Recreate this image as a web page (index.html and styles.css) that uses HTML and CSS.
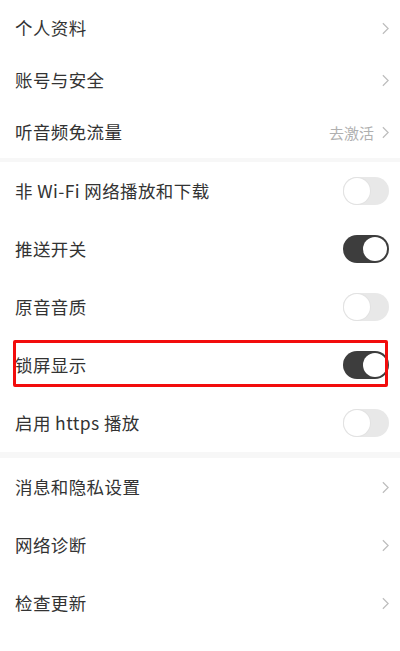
FILE: index.html
```html
<!DOCTYPE html>
<html lang="zh">
<head>
<meta charset="utf-8">
<link rel="stylesheet" href="styles.css">
</head>
<body>
<div class="page">
  <section class="group g1">
    <div class="row"><span class="label">个人资料</span><span class="chev"><svg viewBox="0 0 8 14" width="7" height="13"><path d="M1 1l6 6-6 6" fill="none" stroke="#bdbdbd" stroke-width="1.4"/></svg></span></div>
    <div class="row"><span class="label">账号与安全</span><span class="chev"><svg viewBox="0 0 8 14" width="7" height="13"><path d="M1 1l6 6-6 6" fill="none" stroke="#bdbdbd" stroke-width="1.4"/></svg></span></div>
    <div class="row"><span class="label">听音频免流量</span><span class="right"><span class="hint">去激活</span><span class="chev"><svg viewBox="0 0 8 14" width="7" height="13"><path d="M1 1l6 6-6 6" fill="none" stroke="#bdbdbd" stroke-width="1.4"/></svg></span></span></div>
  </section>
  <div class="sep"></div>
  <section class="group g2">
    <div class="row"><span class="label">非 Wi-Fi 网络播放和下载</span><span class="toggle off"><span class="knob"></span></span></div>
    <div class="row"><span class="label">推送开关</span><span class="toggle on"><span class="knob"></span></span></div>
    <div class="row"><span class="label">原音音质</span><span class="toggle off"><span class="knob"></span></span></div>
    <div class="row marked"><span class="label">锁屏显示</span><span class="toggle on"><span class="knob"></span></span><span class="mark"></span></div>
    <div class="row"><span class="label">启用 https 播放</span><span class="toggle off"><span class="knob"></span></span></div>
  </section>
  <div class="sep sep2"></div>
  <section class="group g3">
    <div class="row"><span class="label">消息和隐私设置</span><span class="chev"><svg viewBox="0 0 8 14" width="7" height="13"><path d="M1 1l6 6-6 6" fill="none" stroke="#bdbdbd" stroke-width="1.4"/></svg></span></div>
    <div class="row"><span class="label">网络诊断</span><span class="chev"><svg viewBox="0 0 8 14" width="7" height="13"><path d="M1 1l6 6-6 6" fill="none" stroke="#bdbdbd" stroke-width="1.4"/></svg></span></div>
    <div class="row"><span class="label">检查更新</span><span class="chev"><svg viewBox="0 0 8 14" width="7" height="13"><path d="M1 1l6 6-6 6" fill="none" stroke="#bdbdbd" stroke-width="1.4"/></svg></span></div>
  </section>
</div>
</body>
</html>
```
FILE: styles.css
```css
* { box-sizing: border-box; }
html, body { margin: 0; padding: 0; background: #fff; }
body {
  width: 400px;
  height: 651px;
  overflow: hidden;
  font-family: "Noto Sans CJK SC", "Noto Sans", sans-serif;
  color: #333;
}
.page { padding-top: 2px; }
.group { display: flex; flex-direction: column; }
.row {
  position: relative;
  display: flex;
  align-items: center;
  justify-content: space-between;
  padding: 0 11px 0 15px;
}
.g1 .row { height: 52px; }
.g2 .row, .g3 .row { height: 58px; }
.label { font-size: 17.5px; line-height: 1; letter-spacing: 0.4px; }
.right { display: flex; align-items: center; gap: 8px; }
.hint { font-size: 15px; color: #b0b0b0; }
.chev { display: flex; align-items: center; width: 7px; }
.sep { height: 4px; background: #f7f7f7; }
.sep2 { height: 6px; }
.toggle {
  position: relative;
  width: 46px;
  height: 28px;
  border-radius: 14px;
}
.toggle .knob {
  position: absolute;
  top: 1px;
  width: 26px;
  height: 26px;
  border-radius: 50%;
  background: #fff;
}
.toggle.off { background: #e8e8e8; }
.toggle.off .knob { left: 1px; box-shadow: 0 0 0 1px #e2e2e2; }
.toggle.on { background: #3d3d3d; }
.toggle.on .knob { right: 2px; top: 2px; width: 24px; height: 24px; }
.mark {
  position: absolute;
  left: 13px;
  right: 12px;
  top: 4px;
  bottom: 7px;
  border: 3px solid #f20c0c;
  border-radius: 2px;
}
```
